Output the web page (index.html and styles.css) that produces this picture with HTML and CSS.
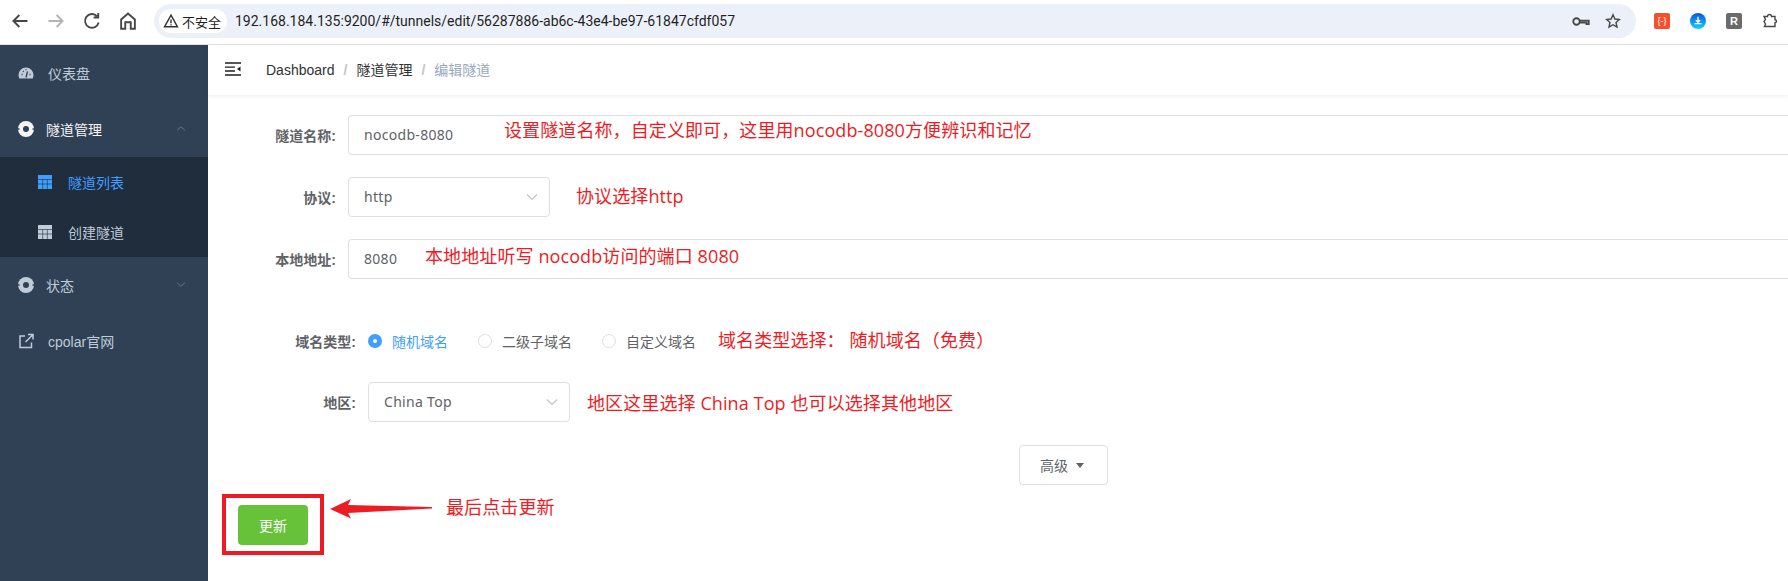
FILE: index.html
```html
<!DOCTYPE html>
<html lang="zh-CN">
	<head>
		<meta charset="UTF-8" />
		<title>编辑隧道</title>
		<link rel="stylesheet" href="styles.css">
	</head>
	<body>

		<header class="browser">
			<div class="nav-icons">
				<svg class="tool" viewBox="0 0 16 16"><path d="M14 8H3M7.5 3.2 2.7 8l4.800 4.800" /></svg>
				<svg class="tool off" viewBox="0 0 16 16"><path d="M2 8h11M8.500 3.200 13.300 8l-4.800 4.800" /></svg>
				<svg class="tool" viewBox="0 0 16 16"><path d="M13.300 9.200A5.500 5.500 0 1 1 12 4.200M13 1.500v3.700H9.300" /></svg>
				<svg class="tool" viewBox="0 0 16 16"><path d="M2.500 14.200V6.800L8 2l5.500 4.800v7.400h-3.300V9H5.800v5.200z" /></svg>
			</div>
			<div class="address">
				<span class="chip">
					<svg class="warn" viewBox="0 0 16 16"><path d="M8 2.200 14.500 13.800h-13zM8 6.500v3.800M8 11.200v1.200" /></svg>
					不安全
				</span>
				<span class="url">192.168.184.135:9200/#/tunnels/edit/56287886-ab6c-43e4-be97-61847cfdf057</span>
				<svg class="key" viewBox="0 0 20 12"><circle cx="5" cy="6" r="3.600" /><path d="M8.600 5h10v4h-2.500V7.200H8.600" /></svg>
				<svg class="star" viewBox="0 0 16 16"><path d="M8 1.800 9.900 6l4.500.5-3.400 3 1 4.500L8 11.700 4 14l1-4.500-3.400-3L6.100 6z" /></svg>
			</div>
			<div class="extensions">
				<span class="ext ext-red">{-}</span>
				<span class="ext ext-blue">
					<svg viewBox="0 0 16 16"><path d="M8 3v6M5.500 7 8 9.500 10.500 7M4 11h8" /></svg>
				</span>
				<span class="ext ext-grey">R</span>
				<svg class="puzzle" viewBox="0 0 16 16"><path d="M2 3.500h3.500a2 2 0 0 1 4 0H13v3.300a1.500 1.500 0 0 1 0 3V13.500H2.500l1-2.500-1.500-2.500 1.500-2z" /></svg>
			</div>
		</header>

		<div class="app">
			<aside class="sidebar">
				<a class="menu-item first">
					<svg class="menu-icon" viewBox="0 0 16 16"><path class="solid" d="M8 2.500a7.500 7.500 0 0 0-7.500 7.500c0 1.300.3 2.400.8 3.500h13.400c.5-1.100.8-2.200.8-3.500A7.500 7.500 0 0 0 8 2.500z" /><path class="cut" d="M8 12.500 9.500 6.500M3.500 9.500h1M11.500 9.500h1M5 6l.7.700M8 4.200v1" /></svg>
					<span>仪表盘</span>
				</a>
				<a class="menu-item open">
					<svg class="menu-icon" viewBox="0 0 16 16"><circle class="solid" cx="8" cy="8" r="8" /><circle class="cut-fill" cx="8" cy="8" r="3" /><path class="cut" d="M0 8h1.500M14.500 8h1.500" /></svg>
					<span>隧道管理</span>
					<svg class="arrow" viewBox="0 0 12 8"><path d="M1.500 6 6 1.800 10.500 6" /></svg>
				</a>
				<div class="submenu">
					<a class="sub-item active">
						<svg class="sub-icon" viewBox="0 0 14 14"><path d="M0 0h14v14H0z" /><path class="grid" d="M0 4.500h14M0 9h14M4.700 4.500V14M9.300 4.500V14" /></svg>
						<span>隧道列表</span>
					</a>
					<a class="sub-item">
						<svg class="sub-icon" viewBox="0 0 14 14"><path d="M0 0h14v14H0z" /><path class="grid" d="M0 4.500h14M0 9h14M4.700 4.500V14M9.300 4.500V14" /></svg>
						<span>创建隧道</span>
					</a>
				</div>
				<a class="menu-item">
					<svg class="menu-icon" viewBox="0 0 16 16"><circle class="solid" cx="8" cy="8" r="8" /><circle class="cut-fill" cx="8" cy="8" r="3" /><path class="cut" d="M0 8h1.500M14.500 8h1.500" /></svg>
					<span>状态</span>
					<svg class="arrow" viewBox="0 0 12 8"><path d="M1.500 2 6 6.200 10.500 2" /></svg>
				</a>
				<a class="menu-item first">
					<svg class="menu-icon line" viewBox="0 0 16 16"><path d="M7 3H2v11.500h11.500V9.500M7.500 9 14.500 2M10 1.500h5v5" /></svg>
					<span>cpolar官网</span>
				</a>
			</aside>

			<main class="main">
				<div class="navbar">
					<svg class="hamburger" viewBox="0 0 16 14"><path d="M0 1h16M0 5.200h10M0 9h10M0 13h16" /><path class="tip" d="M15.500 4.500v5L12 7z" /></svg>
					<nav class="crumbs">
						<span>Dashboard</span><i>/</i><span>隧道管理</span><i>/</i><span class="current">编辑隧道</span>
					</nav>
				</div>

				<div class="content">
					<form class="form">
						<div class="row">
							<label class="label">隧道名称:</label>
							<div class="input">nocodb-8080</div>
							<span class="note note-name">设置隧道名称&#xFF0C;自定义即可&#xFF0C;这里用nocodb-8080方便辨识和记忆</span>
						</div>
						<div class="row">
							<label class="label">协议:</label>
							<div class="input select">http
								<svg class="caret" viewBox="0 0 12 8"><path d="M1 1.500 6 6.500 11 1.500" /></svg>
							</div>
							<span class="note note-protocol">协议选择http</span>
						</div>
						<div class="row">
							<label class="label">本地地址:</label>
							<div class="input">8080</div>
							<span class="note note-addr">本地地址听写 nocodb访问的端口 8080</span>
						</div>

						<div class="row wide radio-row">
							<label class="label">域名类型:</label>
							<span class="radio checked">随机域名</span>
							<span class="radio">二级子域名</span>
							<span class="radio">自定义域名</span>
							<span class="note note-domain">域名类型选择&#xFF1A; 随机域名&#xFF08;免费&#xFF09;</span>
						</div>
						<div class="row wide">
							<label class="label">地区:</label>
							<div class="input select">China Top
								<svg class="caret" viewBox="0 0 12 8"><path d="M1 1.500 6 6.500 11 1.500" /></svg>
							</div>
							<span class="note note-region">地区这里选择 China Top 也可以选择其他地区</span>
						</div>

						<div class="advanced-row">
							<button type="button" class="advanced">高级<b></b></button>
						</div>

						<div class="submit-row">
							<div class="red-box">
								<button type="button" class="submit">更新</button>
							</div>
							<svg class="red-arrow" viewBox="0 0 102 20"><path d="M0 10 21 0 18 6 102 8 102 9.500 18 14 21 19.500z" /></svg>
							<span class="note note-submit">最后点击更新</span>
						</div>
					</form>
				</div>
			</main>
		</div>

	</body>
</html>
```

FILE: styles.css
```css
* {
	box-sizing: border-box;
}

html,
body {
	height: 100%;
}

body {
	margin: 0;
	overflow: hidden;
	background: #fff;
	font-family: "Liberation Sans", "Noto Sans CJK SC", sans-serif;
	font-size: 14px;
	color: #606266;
}

/* browser chrome */
.browser {
	display: flex;
	align-items: center;
	height: 45px;
	border-bottom: 1px solid #e2e3e5;
	padding-bottom: 2px;
}

.nav-icons {
	display: flex;
	gap: 16px;
	padding-left: 10px;
	width: 154px;
}

.tool {
	width: 20px;
	height: 20px;
	fill: none;
	stroke: #474747;
	stroke-width: 1.5;
}

.tool.off {
	stroke: #b4b4b4;
}

.address {
	display: flex;
	align-items: center;
	width: 1482px;
	height: 34px;
	padding: 0 15px 0 5px;
	background: #ecf1f9;
	border-radius: 17px;
}

.chip {
	display: flex;
	align-items: center;
	gap: 3px;
	flex: none;
	width: 68px;
	height: 24px;
	padding-left: 4px;
	background: #fff;
	border-radius: 12px;
	font-family: "Noto Sans CJK SC", sans-serif;
	font-size: 13px;
	color: #1f1f1f;
	white-space: nowrap;
}

.warn {
	flex: none;
	width: 16px;
	height: 16px;
	fill: none;
	stroke: #333;
	stroke-width: 1.4;
}

.url {
	flex: 1;
	margin-left: 8px;
	font-family: Roboto, sans-serif;
	font-size: 14px;
	color: #1f1f1f;
}

.key {
	width: 18px;
	height: 11px;
	margin-right: 15px;
	fill: none;
	stroke: #474747;
	stroke-width: 2;
}

.star {
	width: 16px;
	height: 16px;
	fill: none;
	stroke: #474747;
	stroke-width: 1.4;
}

.extensions {
	display: flex;
	align-items: center;
	gap: 20px;
	padding-left: 18px;
}

.ext {
	display: flex;
	align-items: center;
	justify-content: center;
	width: 16px;
	height: 16px;
	border-radius: 2px;
	font-size: 9px;
	color: #fff;
}

.ext-red {
	background: #f4502c;
}

.ext-blue {
	border-radius: 50%;
	background: linear-gradient(to bottom, #0a52e8, #12d4f5);
}

.ext-blue svg {
	width: 14px;
	height: 14px;
	fill: none;
	stroke: #fff;
	stroke-width: 1.5;
}

.ext-grey {
	background: #6b6b6b;
	font-size: 11px;
	font-weight: bold;
}

.puzzle {
	width: 16px;
	height: 16px;
	fill: none;
	stroke: #474747;
	stroke-width: 1.4;
}

/* app layout */
.app {
	display: flex;
	height: calc(100% - 45px);
}

.sidebar {
	flex: none;
	width: 208px;
	background: #304156;
	color: #bfcbd9;
}

.menu-item {
	display: flex;
	align-items: center;
	height: 56px;
	padding-left: 18px;
}

.menu-item span {
	margin-left: 12px;
}

.menu-item.first span {
	margin-left: 14px;
}

.menu-item.open {
	color: #f4f4f5;
}

.menu-icon {
	width: 16px;
	height: 16px;
}

.solid {
	fill: currentColor;
}

.cut {
	fill: none;
	stroke: #304156;
	stroke-width: 1.3;
}

.cut-fill {
	fill: #304156;
}

.menu-icon.line {
	fill: none;
	stroke: #bfcbd9;
	stroke-width: 1.5;
}

.arrow {
	width: 10px;
	height: 7px;
	margin-left: auto;
	margin-right: 22px;
	margin-top: -2px;
	fill: none;
	stroke: #6e7c8c;
	stroke-width: 1.1;
}

.submenu {
	background: #1f2d3d;
}

.sub-item {
	display: flex;
	align-items: center;
	gap: 16px;
	height: 50px;
	padding-left: 38px;
}

.sub-item.active {
	color: #409eff;
}

.sub-icon {
	width: 14px;
	height: 14px;
	fill: currentColor;
}

.grid {
	fill: none;
	stroke: #1f2d3d;
	stroke-width: .6;
}

.main {
	flex: 1;
	min-width: 0;
}

.navbar {
	display: flex;
	align-items: center;
	height: 50px;
	padding-left: 17px;
	box-shadow: 0 1px 4px rgba(0, 21, 41, .08);
}

.hamburger {
	width: 16px;
	height: 14px;
	margin-top: -3px;
	fill: none;
	stroke: #1f1f1f;
	stroke-width: 1.3;
}

.hamburger .tip {
	fill: #1f1f1f;
	stroke: none;
}

.crumbs {
	margin: -2px 0 0 25px;
	color: #303133;
	font-size: 14px;
}

.crumbs i {
	margin: 0 9px;
	font-style: normal;
	font-weight: bold;
	color: #c0c4cc;
}

.crumbs .current {
	color: #97a8be;
}

/* form, its text boxes run on past the right side of the window */
.content {
	padding: 20px 0 0 40px;
}

.row {
	position: relative;
	display: flex;
	align-items: center;
	height: 40px;
	margin-bottom: 22px;
}

.label {
	flex: none;
	width: 100px;
	padding-right: 12px;
	text-align: right;
	font-weight: bold;
	color: #606266;
}

.row.wide .label {
	width: 120px;
}

.input {
	display: flex;
	align-items: center;
	flex: 1;
	height: 40px;
	padding: 0 15px 2px;
	border: 1px solid #dcdfe6;
	border-right: 0;
	border-radius: 4px 0 0 4px;
	font-family: "Noto Sans", sans-serif;
	font-size: 14px;
	letter-spacing: .3px;
	color: #606266;
}

.select {
	flex: none;
	justify-content: space-between;
	width: 202px;
	padding-right: 11px;
	border-right: 1px solid #dcdfe6;
	border-radius: 4px;
}

.caret {
	width: 12px;
	height: 8px;
	margin-top: 2px;
	fill: none;
	stroke: #c0c4cc;
	stroke-width: 1.2;
}

.radio-row {
	margin-top: 42px;
	margin-bottom: 21px;
}

.radio {
	display: flex;
	align-items: center;
	gap: 10px;
	margin-right: 30px;
}

.radio::before {
	content: "";
	box-sizing: border-box;
	width: 14px;
	height: 14px;
	border: 1px solid #dcdfe6;
	border-radius: 50%;
}

.radio.checked {
	color: #409eff;
}

.radio.checked::before {
	border: 5px solid #409eff;
}

/* red notes added on top of the screenshot */
.note {
	font-family: "Open Sans", "Noto Sans CJK SC", sans-serif;
	font-size: 18px;
	line-height: 26px;
	letter-spacing: .1px;
	color: #ed1c24;
	white-space: nowrap;
}

.note-name {
	position: absolute;
	left: 256px;
	top: 2px;
}

.note-addr {
	position: absolute;
	left: 177px;
	top: 4px;
}

.note-protocol {
	margin: -2px 0 0 26px;
}

.note-domain {
	margin: -2px 0 0 -8px;
}

.note-region {
	margin: 1px 0 0 17px;
}

.advanced-row {
	margin: 23px 0 0 771px;
}

.advanced {
	display: inline-flex;
	align-items: center;
	gap: 8px;
	width: 89px;
	height: 40px;
	padding: 0 0 0 20px;
	background: #fff;
	border: 1px solid #dcdfe6;
	border-radius: 4px;
	font: inherit;
	color: #606266;
}

.advanced b {
	border: 4.500px solid transparent;
	border-top: 5px solid #606266;
	border-bottom: 0;
}

.submit-row {
	display: flex;
	align-items: flex-start;
	margin: 9px 0 0 -26px;
}

.red-box {
	width: 102px;
	height: 61px;
	padding: 7px 12px;
	border: 4px solid #ed1c24;
}

.submit {
	display: block;
	width: 70px;
	height: 40px;
	background: #67c23a;
	border: 0;
	border-radius: 4px;
	font: inherit;
	color: #fff;
}

.red-arrow {
	width: 102px;
	height: 20px;
	margin: 5px 0 0 6px;
	fill: #ed1c24;
}

.note-submit {
	margin: 0 0 0 14px;
}
```
